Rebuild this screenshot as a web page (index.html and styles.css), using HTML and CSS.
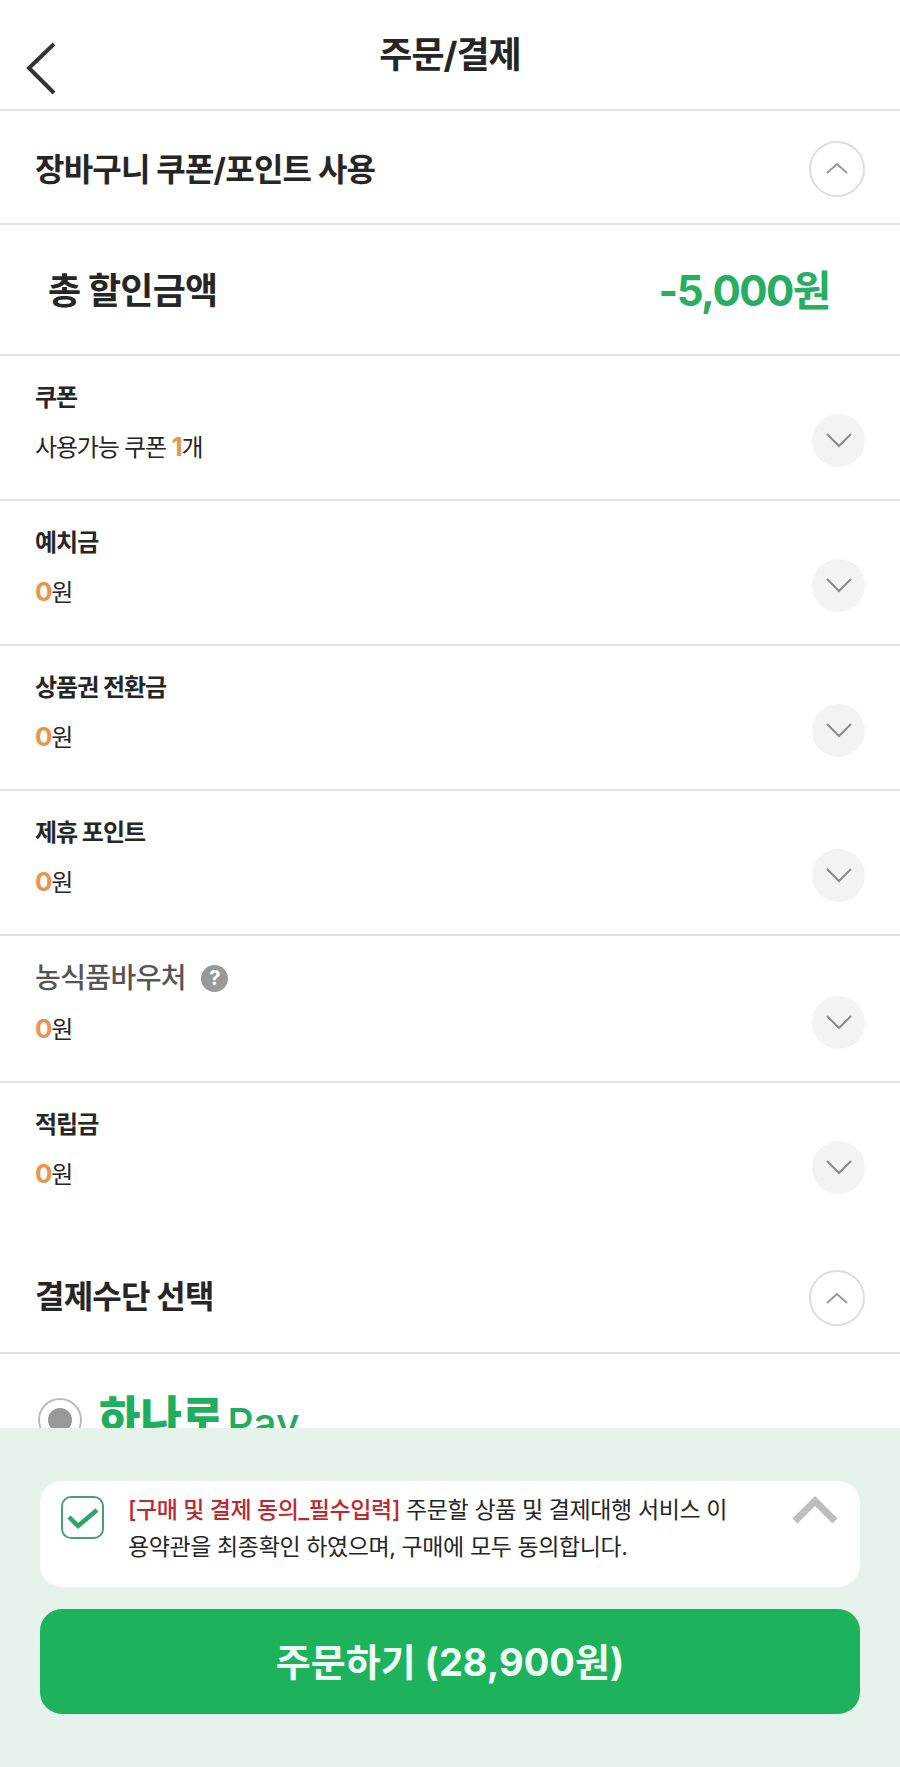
FILE: index.html
```html
<!DOCTYPE html>
<html lang="ko">
<head>
  <meta charset="utf-8" />
  <title>주문/결제</title>
  <meta name="viewport" content="width=device-width, initial-scale=1.0">
  <link rel="stylesheet" href="styles.css">
</head>
<body>
  <div class="page">
    <!-- Top bar -->
    <header class="topbar">
      <svg class="back" width="32" height="54" viewBox="0 0 32 54"><path d="M28 2 L3 26 L28 51" /></svg>
      <h1>주문/결제</h1>
    </header>

    <!-- Coupon section -->
    <section class="section-head">
      <h2>장바구니 쿠폰/포인트 사용</h2>
      <span class="circle circle-up"><svg width="22" height="11" viewBox="0 0 22 11"><path d="M1 10 L11 1 L21 10" /></svg></span>
    </section>

    <div class="total">
      <span class="total-label">총 할인금액</span>
      <span class="total-value">-5,000원</span>
    </div>

    <div class="row">
      <div class="row-info">
        <div class="row-title">쿠폰</div>
        <div class="row-value">사용가능 쿠폰 <b class="num">1</b>개</div>
      </div>
      <span class="circle circle-down"><svg width="26" height="15" viewBox="0 0 26 15"><path d="M1 1 L13 13 L25 1" /></svg></span>
    </div>
    <div class="row">
      <div class="row-info">
        <div class="row-title">예치금</div>
        <div class="row-value"><b class="num">0</b>원</div>
      </div>
      <span class="circle circle-down"><svg width="26" height="15" viewBox="0 0 26 15"><path d="M1 1 L13 13 L25 1" /></svg></span>
    </div>
    <div class="row">
      <div class="row-info">
        <div class="row-title">상품권 전환금</div>
        <div class="row-value"><b class="num">0</b>원</div>
      </div>
      <span class="circle circle-down"><svg width="26" height="15" viewBox="0 0 26 15"><path d="M1 1 L13 13 L25 1" /></svg></span>
    </div>
    <div class="row">
      <div class="row-info">
        <div class="row-title">제휴 포인트</div>
        <div class="row-value"><b class="num">0</b>원</div>
      </div>
      <span class="circle circle-down"><svg width="26" height="15" viewBox="0 0 26 15"><path d="M1 1 L13 13 L25 1" /></svg></span>
    </div>
    <div class="row row-voucher">
      <div class="row-info">
        <div class="row-title">농식품바우처 <span class="help">?</span></div>
        <div class="row-value"><b class="num">0</b>원</div>
      </div>
      <span class="circle circle-down"><svg width="26" height="15" viewBox="0 0 26 15"><path d="M1 1 L13 13 L25 1" /></svg></span>
    </div>
    <div class="row row-last">
      <div class="row-info">
        <div class="row-title">적립금</div>
        <div class="row-value"><b class="num">0</b>원</div>
      </div>
      <span class="circle circle-down"><svg width="26" height="15" viewBox="0 0 26 15"><path d="M1 1 L13 13 L25 1" /></svg></span>
    </div>

    <!-- Payment section -->
    <section class="section-head section-pay">
      <h2>결제수단 선택</h2>
      <span class="circle circle-up"><svg width="22" height="11" viewBox="0 0 22 11"><path d="M1 10 L11 1 L21 10" /></svg></span>
    </section>

    <div class="pay-option">
      <span class="radio"><i></i></span>
      <span class="pay-logo">하나로<em>Pay</em></span>
    </div>

    <!-- Fixed footer -->
    <footer class="footer">
      <div class="agree">
        <span class="check"><svg width="32" height="24" viewBox="0 0 32 24"><path d="M2 11 L11 20 L30 4" /></svg></span>
        <p><span class="req">[구매 및 결제 동의_필수입력]</span> <span>주문할 상품 및 결제대행 서비스 이</span><br><span>용약관을 최종확인 하였으며, 구매에 모두 동의합니다.</span></p>
        <svg class="agree-arrow" width="46" height="28" viewBox="0 0 46 28"><path d="M3 25 L23 5 L43 25" /></svg>
      </div>
      <button class="order">주문하기 (28,900원)</button>
    </footer>
  </div>
</body>
</html>
```

FILE: styles.css
```css
* {
  box-sizing: border-box;
}
body {
  margin: 0;
  background: #fff;
  color: #262626;
  font-family: "Inter", "Noto Sans CJK KR", sans-serif;
}
.page {
  position: relative;
  width: 900px;
  height: 1767px;
  overflow: hidden;
}
.topbar {
  position: relative;
  height: 111px;
  border-bottom: 2px solid #e2e2e2;
  text-align: center;
}
.topbar h1 {
  margin: 0;
  padding-top: 29px;
  font-size: 36px;
  line-height: 52px;
  font-weight: 700;
  letter-spacing: -1px;
}
.back {
  position: absolute;
  left: 26px;
  top: 42px;
}
.back path {
  fill: none;
  stroke: #333;
  stroke-width: 4;
}
.section-head {
  display: flex;
  align-items: center;
  justify-content: space-between;
  height: 114px;
  padding: 0 35px;
  border-bottom: 2px solid #e2e2e2;
}
.section-head h2 {
  margin: 0;
  font-size: 32px;
  font-weight: 700;
  letter-spacing: -0.8px;
}
.section-pay {
  height: 122px;
  padding-top: 4px;
}
.circle {
  display: flex;
  align-items: center;
  justify-content: center;
  flex: none;
  border-radius: 50%;
}
.circle path {
  fill: none;
}
.circle-up {
  width: 56px;
  height: 56px;
  margin-top: 3px;
  border: 2px solid #ddd;
  background: #fff;
}
.section-pay .circle-up {
  margin-top: 8px;
}
.circle-up path {
  stroke: #999;
  stroke-width: 2;
}
.circle-down {
  width: 53px;
  height: 53px;
  margin-top: 58px;
  background: #f3f3f3;
}
.circle-down path {
  stroke: #8a8a8a;
  stroke-width: 2;
}
.total {
  display: flex;
  align-items: center;
  justify-content: space-between;
  height: 131px;
  padding: 0 70px 4px 48px;
  border-bottom: 2px solid #e2e2e2;
}
.total-label {
  font-size: 36px;
  font-weight: 700;
  letter-spacing: -0.8px;
}
.total-value {
  color: #27ae60;
  font-size: 42px;
  font-weight: 700;
  letter-spacing: -1.5px;
}
.row {
  display: flex;
  align-items: flex-start;
  justify-content: space-between;
  height: 145px;
  padding: 0 35px;
  border-bottom: 2px solid #e2e2e2;
}
.row-info {
  padding-top: 24px;
}
.row-title {
  height: 36px;
  font-size: 24px;
  line-height: 36px;
  font-weight: 700;
  letter-spacing: -1px;
}
.row-value {
  margin-top: 13px;
  font-size: 24px;
  line-height: 36px;
  letter-spacing: -1.2px;
}
.num {
  color: #e8954f;
  font-size: 26px;
  font-weight: 700;
}
.row-voucher {
  height: 147px;
}
.row-voucher .circle-down {
  margin-top: 60px;
}
.row-voucher .row-info {
  padding-top: 24px;
}
.row-voucher .row-title {
  display: flex;
  align-items: center;
  gap: 15px;
  color: #555;
  font-size: 28px;
  font-weight: 500;
  letter-spacing: -0.6px;
}
.row-voucher .row-value {
  margin-top: 15px;
}
.help {
  display: flex;
  align-items: center;
  justify-content: center;
  width: 27px;
  height: 27px;
  border-radius: 50%;
  background: #999;
  color: #fff;
  font-size: 20px;
  font-weight: 700;
}
.row-last {
  height: 149px;
  border-bottom: 0;
}
.pay-option {
  display: flex;
  align-items: flex-start;
  gap: 17px;
  padding: 44px 0 0 38px;
}
.radio {
  display: flex;
  align-items: center;
  justify-content: center;
  width: 44px;
  height: 44px;
  border: 2px solid #bbb;
  border-radius: 50%;
}
.radio i {
  width: 24px;
  height: 24px;
  border-radius: 50%;
  background: #999;
}
.pay-logo {
  margin-top: -16px;
  color: #1fae5f;
  font-size: 45px;
  line-height: 72px;
  font-weight: 900;
  white-space: nowrap;
}
.pay-logo em {
  margin-left: 4px;
  font-style: normal;
  font-weight: 500;
  font-size: 41px;
  vertical-align: -4px;
}
.footer {
  position: absolute;
  left: 0;
  right: 0;
  top: 1428px;
  bottom: 0;
  padding: 53px 40px 0;
  background: #e5f3ea;
}
.agree {
  display: flex;
  align-items: flex-start;
  height: 106px;
  padding: 15px 22px 0 21px;
  border-radius: 22px;
  background: #fff;
}
.check {
  display: flex;
  align-items: center;
  justify-content: center;
  flex: none;
  width: 43px;
  height: 43px;
  border: 2px solid #4a9e78;
  border-radius: 10px;
}
.check path {
  fill: none;
  stroke: #2ca56a;
  stroke-width: 4.5;
}
.agree p {
  flex: 1;
  margin: -4px 30px 0 24px;
  font-size: 23px;
  line-height: 37px;
  letter-spacing: -0.4px;
}
.req {
  color: #c0282d;
  font-weight: 500;
}
.agree-arrow {
  flex: none;
}
.agree-arrow path {
  fill: none;
  stroke: #bdbdbd;
  stroke-width: 7;
}
.order {
  display: block;
  width: 100%;
  height: 105px;
  margin-top: 22px;
  padding-bottom: 6px;
  border: 0;
  border-radius: 22px;
  background: #1db25b;
  color: #f0fff6;
  font-family: inherit;
  font-size: 38px;
  font-weight: 700;
}
```
